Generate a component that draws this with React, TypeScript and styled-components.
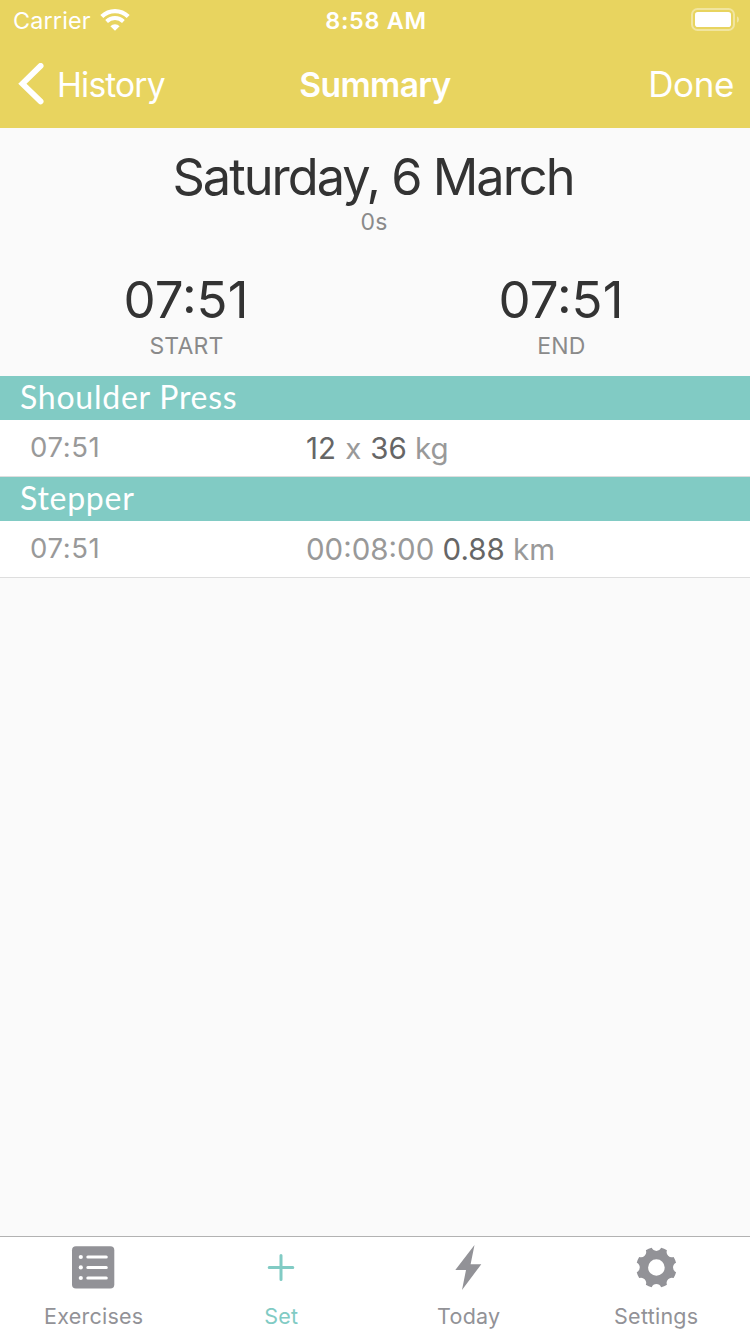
import React from "react";
import styled, { createGlobalStyle } from "styled-components";

const GlobalStyle = createGlobalStyle`
  * { box-sizing: border-box; }
  body {
    margin: 0;
    background: #fafafa;
    font-family: Inter, "Liberation Sans", sans-serif;
  }
`;

const Screen = styled.div`
  display: flex;
  flex-direction: column;
  width: 750px;
  height: 1334px;
  background: #fafafa;
  overflow: hidden;
  white-space: nowrap;
`;

const Header = styled.header`
  height: 128px;
  background: #e8d45f;
  color: #fff;
`;

const StatusBar = styled.div`
  display: grid;
  grid-template-columns: 1fr auto 1fr;
  align-items: start;
  height: 40px;
  padding: 0 11px 0 13px;
  line-height: 42px;
`;

const Carrier = styled.div`
  display: flex;
  gap: 9px;
  font-size: 23.4px;
  font-weight: 400;
  letter-spacing: 0.15px;
`;

const WifiIcon = styled.svg`
  margin-top: 8px;
`;

const Clock = styled.div`
  font-size: 23.4px;
  font-weight: 600;
  letter-spacing: 0.7px;
`;

const BatteryIcon = styled.svg`
  justify-self: end;
  margin-top: 8px;
`;

const NavBar = styled.nav`
  display: grid;
  grid-template-columns: 1fr auto 1fr;
  align-items: center;
  height: 88px;
  padding: 0 16px 0 18px;
  line-height: 88px;
  font-size: 33.6px;
`;

const BackButton = styled.div`
  display: flex;
  align-items: center;
  gap: 12px;
  letter-spacing: -0.85px;

  span {
    padding-top: 2px;
    line-height: 86px;
  }
`;

const NavTitle = styled.div`
  padding: 2px 2px 0 0;
  line-height: 86px;
  font-weight: 600;
  letter-spacing: -0.6px;
`;

const DoneButton = styled.div`
  justify-self: end;
  font-size: 35px;
  letter-spacing: -0.4px;
`;

const Overview = styled.section`
  height: 248px;
  padding: 18px 2px 0 0;
  text-align: center;
`;

const BigText = styled.div<{ $spacing?: number }>`
  font-size: 51px;
  line-height: 62px;
  letter-spacing: ${(p) => p.$spacing ?? 0}px;
  color: #333;
`;

const DateTitle = styled(BigText)`
  padding-right: 2px;
  font-size: 50.5px;
`;

const Caption = styled.div`
  font-size: 23px;
  line-height: 28px;
  font-weight: 400;
  letter-spacing: 0.2px;
  color: #8a8a8a;
`;

const TimeRange = styled.div`
  display: grid;
  grid-template-columns: 375px 375px;
  padding-top: 33px;
`;

const TimePoint = styled.div`
  padding-right: 2px;

  ${BigText} {
    padding-right: 1px;
    margin-bottom: 1px;
  }
`;

const SectionTitle = styled.h2`
  margin: 0;
  height: 44px;
  padding-left: 20px;
  background: #81cbc4;
  color: #fff;
  font-family: Lato, "Open Sans", sans-serif;
  font-size: 32px;
  font-weight: 400;
  line-height: 41px;
  letter-spacing: 0.75px;
`;

const SetRow = styled.div`
  display: grid;
  grid-template-columns: 276px 1fr;
  height: 57px;
  padding-left: 30px;
  background: #fff;
  border-bottom: 1px solid #dedede;
  color: #999;
`;

const SetTime = styled.div`
  font-size: 27.5px;
  line-height: 55px;
  letter-spacing: 0.6px;
`;

const SetDetail = styled.div`
  font-size: 29.5px;
  line-height: 56px;
`;

const Amount = styled.span`
  color: #666;
`;

/* Keeps the letter x from turning into a multiplication sign between digits. */
const Times = styled.span`
  margin: 0 0.5px 0 1px;
  font-feature-settings: "calt" 0;
`;

const Spacer = styled.div`
  flex: 1;
`;

const TabBar = styled.nav`
  display: grid;
  grid-template-columns: repeat(4, 1fr);
  height: 98px;
  background: #fff;
  border-top: 1px solid #b2b2b2;
`;

const Tab = styled.div<{ $active?: boolean }>`
  display: flex;
  flex-direction: column;
  align-items: center;
  padding-top: 6px;
  color: ${(p) => (p.$active ? "#81cbc4" : "#929297")};
`;

const TabIcon = styled.svg`
  display: block;
  width: 48px;
  height: 48px;
`;

const TabLabel = styled.div`
  margin-top: 11px;
  font-size: 21.5px;
  line-height: 29px;
  letter-spacing: 0.25px;
`;

function gearPath(): string {
  const at = (radius: number, degrees: number) => {
    const a = (degrees * Math.PI) / 180;
    return `${(24.4 + radius * Math.sin(a)).toFixed(2)} ${(24.5 - radius * Math.cos(a)).toFixed(2)}`;
  };
  const outer = 20.2;
  const halfNotch = 13.5;
  let d = "";
  for (let i = 0; i < 8; i++) {
    const c = i * 45;
    d += i === 0 ? "M" : `A${outer} ${outer} 0 0 1 `;
    d += `${at(outer, c - halfNotch)}A5.2 5.2 0 0 0 ${at(outer, c + halfNotch)}`;
  }
  d += `A${outer} ${outer} 0 0 1 ${at(outer, -halfNotch)}Z`;
  return d + "M24.4 16.2a8.3 8.3 0 1 0 0 16.6a8.3 8.3 0 1 0 0-16.6Z";
}

const sets = [
  {
    exercise: "Shoulder Press",
    time: "07:51",
    detail: (
      <>
        <Amount>12</Amount> <Times>x</Times> <Amount>36</Amount> kg
      </>
    ),
  },
  {
    exercise: "Stepper",
    time: "07:51",
    detail: (
      <>
        00:08:00 <Amount>0.88</Amount> km
      </>
    ),
  },
];

const tabs = [
  {
    label: "Exercises",
    icon: (
      <>
        <rect x="2" y="3.2" width="42.3" height="42.3" rx="4" fill="currentColor" />
        <g fill="#fff">
          <circle cx="10.8" cy="14" r="2.1" />
          <circle cx="10.8" cy="24.4" r="2.1" />
          <circle cx="10.8" cy="35" r="2.1" />
        </g>
        <path d="M17.8 14H36.3M17.8 24.4H36.3M17.8 35H36.3" stroke="#fff" strokeWidth="3" strokeLinecap="round" />
      </>
    ),
  },
  {
    label: "Set",
    active: true,
    icon: <path d="M24 12.4V36.6M12.2 24.5H35.8" stroke="currentColor" strokeWidth="3" strokeLinecap="round" />,
  },
  {
    label: "Today",
    icon: <path d="M29.5 2L10.3 27H21L17 47L36.3 21.2H25.6Z" fill="currentColor" />,
  },
  {
    label: "Settings",
    icon: <path d={gearPath()} fill="currentColor" fillRule="evenodd" />,
  },
];

export default function App() {
  return (
    <>
      <GlobalStyle />
      <Screen>
        <Header>
          <StatusBar>
            <Carrier>
              <span>Carrier</span>
              <WifiIcon width="30" height="23" viewBox="0 0 30 23" fill="none" stroke="#fff">
                <path d="M1.8 8.5A18.8 18.8 0 0 1 28.2 8.5" strokeWidth="4.2" />
                <path d="M6.6 13.5A12 12 0 0 1 23.4 13.5" strokeWidth="3.9" />
                <path d="M15 22.8L10.4 18.2A6.4 6.4 0 0 1 19.6 18.2Z" fill="#fff" stroke="none" />
              </WifiIcon>
            </Carrier>
            <Clock>8:58 AM</Clock>
            <BatteryIcon width="48" height="23" viewBox="0 0 48 23">
              <rect x="1" y="1" width="42" height="21" rx="5.5" fill="none" stroke="#fff" strokeOpacity="0.4" strokeWidth="2" />
              <rect x="4" y="4" width="36" height="15" rx="2.8" fill="#fff" />
              <path d="M46 8.2Q48 9.3 48 11.5T46 14.8Z" fill="#fff" fillOpacity="0.4" />
            </BatteryIcon>
          </StatusBar>
          <NavBar>
            <BackButton>
              <svg width="27" height="42" viewBox="0 0 27 42" fill="none">
                <path d="M22.6 2.9L4.4 20.8L22.6 38.4" stroke="#fff" strokeWidth="5.8" strokeLinecap="round" />
              </svg>
              <span>History</span>
            </BackButton>
            <NavTitle>Summary</NavTitle>
            <DoneButton>Done</DoneButton>
          </NavBar>
        </Header>
        <Overview>
          <DateTitle $spacing={-2}>Saturday, 6 March</DateTitle>
          <Caption>0s</Caption>
          <TimeRange>
            <TimePoint>
              <BigText>07:51</BigText>
              <Caption>START</Caption>
            </TimePoint>
            <TimePoint>
              <BigText>07:51</BigText>
              <Caption>END</Caption>
            </TimePoint>
          </TimeRange>
        </Overview>
        {sets.map((s) => (
          <div key={s.exercise}>
            <SectionTitle>{s.exercise}</SectionTitle>
            <SetRow>
              <SetTime>{s.time}</SetTime>
              <SetDetail>{s.detail}</SetDetail>
            </SetRow>
          </div>
        ))}
        <Spacer />
        <TabBar>
          {tabs.map((t) => (
            <Tab key={t.label} $active={t.active}>
              <TabIcon viewBox="0 0 48 48">{t.icon}</TabIcon>
              <TabLabel>{t.label}</TabLabel>
            </Tab>
          ))}
        </TabBar>
      </Screen>
    </>
  );
}
